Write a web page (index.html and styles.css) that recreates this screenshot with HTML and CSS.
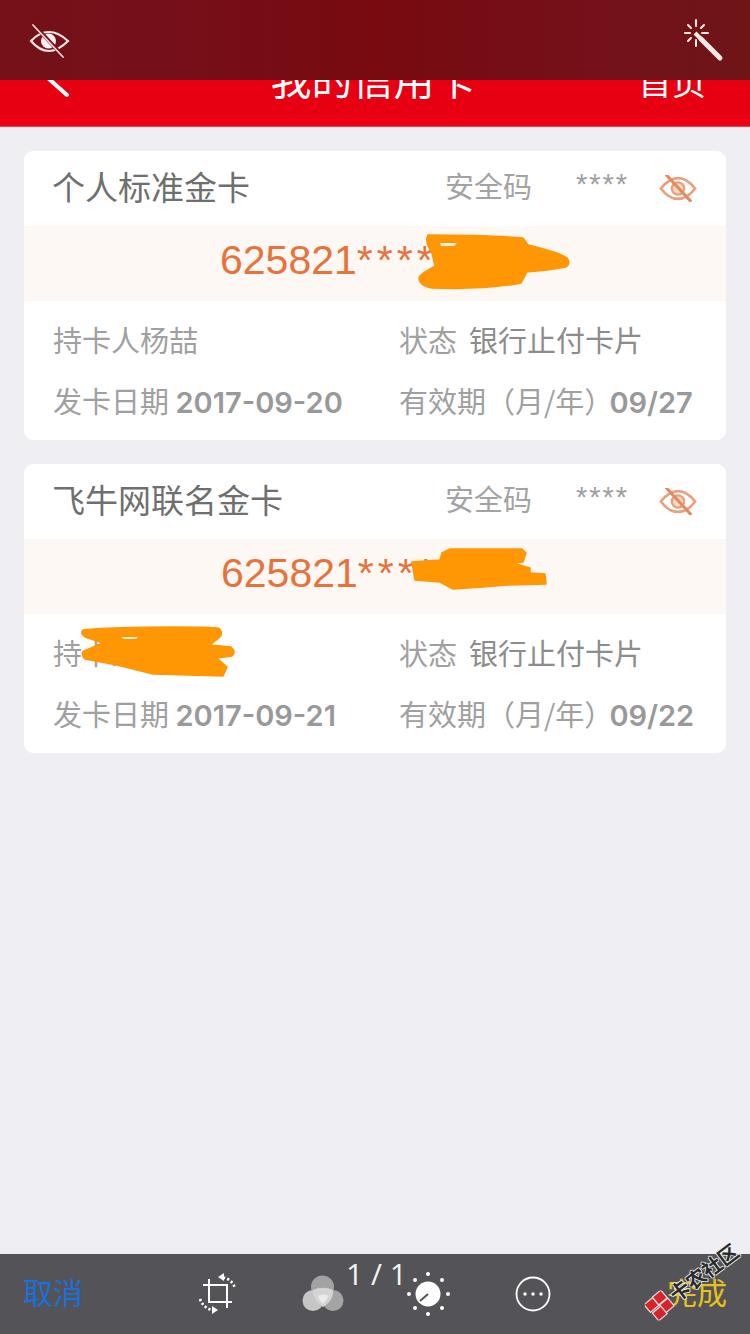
FILE: index.html
```html
<!DOCTYPE html>
<html lang="zh-CN">
<head>
<meta charset="utf-8">
<title>我的信用卡</title>
<link rel="stylesheet" href="styles.css">
</head>
<body>
<svg class="defs" width="0" height="0" aria-hidden="true">
  <symbol id="eye-off" viewBox="0 0 40 28">
    <path d="M2 14C8 6 14 3 20 3s12 3 18 11c-6 8-12 11-18 11S8 22 2 14Z" fill="none" stroke="currentColor" stroke-width="2.800"/>
    <circle cx="20" cy="14" r="6.500" fill="#f8d8c8" stroke="currentColor" stroke-width="2.400"/>
    <path d="M8 0 33 27" stroke="#e58a5f" stroke-width="3.200" stroke-linecap="round"/>
  </symbol>
</svg>
<div class="screen">
  <header class="navbar">
    <svg class="back" width="30" height="40" viewBox="0 0 30 40"><path d="M24 2 6 18l18 16" fill="none" stroke="#fff" stroke-width="4" stroke-linecap="round"/></svg>
    <h1 class="nav-title">我的信用卡</h1>
    <span class="nav-home">首页</span>
  </header>

  <main class="cards">
    <section class="card">
      <div class="card-head">
        <h2 class="card-name">个人标准金卡</h2>
        <span class="cvv-label">安全码</span>
        <span class="cvv-value">****</span>
        <svg class="eye" width="38" height="27"><use href="#eye-off"/></svg>
      </div>
      <div class="card-number">625821<span class="stars">****</span></div>
      <div class="card-info">
        <div class="label">持卡人杨喆</div>
        <div class="label">状态<span class="status">银行止付卡片</span></div>
        <div class="label">发卡日期 <b class="num">2017-09-20</b></div>
        <div class="label">有效期（月/年）<b class="num end">09/27</b></div>
      </div>
      <svg class="scribble" viewBox="24 151 702 289">
        <path class="ink" d="M428 235C460 235 500 236 523 238L528 245C545 249 560 253 567 258C570 262 569 265 566 267C550 270 538 271 527 272L521 283C495 288 460 289 432 288C422 286 417 281 420 276C425 271 432 268 435 266L432 253C428 247 425 240 428 235Z"/>
        <path class="ink-gap" d="M440 243h17l-3 3h-13Z"/>
      </svg>
    </section>

    <section class="card">
      <div class="card-head">
        <h2 class="card-name">飞牛网联名金卡</h2>
        <span class="cvv-label">安全码</span>
        <span class="cvv-value">****</span>
        <svg class="eye" width="38" height="27"><use href="#eye-off"/></svg>
      </div>
      <div class="card-number second">625821<span class="stars">****</span></div>
      <div class="card-info">
        <div class="label">持卡人</div>
        <div class="label">状态<span class="status">银行止付卡片</span></div>
        <div class="label">发卡日期 <b class="num">2017-09-21</b></div>
        <div class="label">有效期（月/年）<b class="num end">09/22</b></div>
      </div>
      <svg class="scribble" viewBox="24 464 702 289">
        <path class="ink" d="M442 553 450 549H522L526 553 523 562 513 563 530 568V573L545 574 546 584 507 585 483 587 453 589 440 582 415 580 412 562 440 560Z"/>
        <path class="ink" d="M83 630C100 627 190 626 218 628C223 631 222 636 219 638L210 645 231 647C235 650 235 654 232 656L217 658 227 667 223 676 153 674 117 665 85 659C81 655 82 652 84 651L103 643 85 637C81 634 81 632 83 630Z"/>
        <path class="ink-gap" d="M121 637h17l-2 2h-12Z"/>
      </svg>
    </section>
  </main>

  <footer class="toolbar">
    <span class="tool-text cancel">取消</span>
    <div class="tools">
      <svg class="tool" width="44" height="44" viewBox="196 1272 44 44">
        <path d="M203 1285H227V1308M209 1279V1302H232" fill="none" stroke="#fff" stroke-width="2"/>
        <path d="M223 1277.500C228 1278 233 1282 235 1288M200 1299C202 1305 207 1309 212 1310" fill="none" stroke="#fff" stroke-width="2.600" stroke-dasharray="2.200 2.200"/>
        <path d="M224 1273V1281L218 1277ZM212 1306V1314L218 1310Z" fill="#fff"/>
      </svg>
      <svg class="tool" width="44" height="44" viewBox="301 1272 44 44">
        <circle cx="322.500" cy="1287" r="11.500" fill="#a2a2a3"/>
        <circle cx="313" cy="1300.500" r="10.500" fill="#c6c6c7"/>
        <circle cx="333" cy="1300.500" r="10.500" fill="#a4a4a5"/>
        <path d="M313 1290C319 1287 327 1287 333 1290C334 1296 330 1303 323 1307C317 1303 312 1296 313 1290Z" fill="#d4d4d5"/>
        <path d="M318 1296C321 1294 326 1294 328 1296C327 1300 325 1302 323 1304C321 1302 319 1300 318 1296Z" fill="#ebebeb"/>
      </svg>
      <svg class="tool" width="44" height="44" viewBox="406 1274 44 44">
        <circle cx="428" cy="1296" r="12.500" fill="#fff"/>
        <path d="M420 1303 428 1296" stroke="#545458" stroke-width="2"/>
        <g fill="#fff">
          <circle cx="428" cy="1276" r="2"/><circle cx="442" cy="1282" r="2"/><circle cx="448" cy="1296" r="2"/><circle cx="442" cy="1310" r="2"/>
          <circle cx="428" cy="1316" r="2"/><circle cx="415" cy="1310" r="2"/><circle cx="409" cy="1296" r="2"/><circle cx="415" cy="1282" r="2"/>
        </g>
      </svg>
      <svg class="tool" width="44" height="44" viewBox="511 1271 44 44">
        <circle cx="533" cy="1293" r="16.500" fill="none" stroke="#fff" stroke-width="1.800"/>
        <circle cx="525" cy="1293" r="1.700" fill="#fff"/><circle cx="533" cy="1293" r="1.700" fill="#fff"/><circle cx="541" cy="1293" r="1.700" fill="#fff"/>
      </svg>
    </div>
    <span class="tool-text done">完成</span>
  </footer>

  <div class="edit-bar">
    <svg width="44" height="40" viewBox="26 20 44 40">
      <path d="M31 41C37 34.500 43 32 49 32s12 2.500 19 9c-7 7-13 10-19 10s-12-3-18-10Z" fill="none" stroke="#f5e6e6" stroke-width="2.200"/>
      <circle cx="48.500" cy="41" r="7.500" fill="#f8f0f0"/>
      <path d="M34 25 64 57" stroke="#751016" stroke-width="4"/>
      <path d="M33 25 63 57" stroke="#efd8d8" stroke-width="1.800" stroke-linecap="round"/>
    </svg>
    <svg width="44" height="44" viewBox="681 18 44 44">
      <path d="M695 33 701 39" stroke="#f6e8e8" stroke-width="4" fill="none"/>
      <path d="M701 39 720 58" stroke="#f6e8e8" stroke-width="5" stroke-linecap="round"/>
      <path d="M696 20V26M685 33H690M702 33H708M688 25 691 28M704 25 701 28M688 41 691 38M696 40V46" stroke="#f6e8e8" stroke-width="2" stroke-linecap="round"/>
    </svg>
  </div>

  <div class="pager">1 / 1</div>

  <div class="watermark">
    <svg width="30" height="30" viewBox="0 0 30 30" class="wm-logo">
      <g stroke="#dcdcdc" stroke-width="1.200" fill="#d8232a">
        <rect x="1.500" y="9.500" width="11" height="10" transform="rotate(-40 7 15)"/>
        <rect x="9.500" y="2" width="11" height="10" transform="rotate(-40 15 7)"/>
        <rect x="16.500" y="10" width="11" height="10" transform="rotate(-40 22 15)"/>
        <rect x="9.500" y="18" width="11" height="10" transform="rotate(-40 15 23)"/>
      </g>
    </svg>
    <span class="wm-text">卡农社区</span>
  </div>
</div>
</body>
</html>
```
FILE: styles.css
```css
* {
  box-sizing: border-box;
}

html,
body {
  margin: 0;
  padding: 0;
}

.defs {
  position: absolute;
}

.screen {
  position: relative;
  display: flex;
  flex-direction: column;
  width: 750px;
  height: 1334px;
  overflow: hidden;
  background: #eeeef3;
  font-family: "Noto Sans CJK SC", "Liberation Sans", sans-serif;
}

/* Navigation bar */
.navbar {
  flex: none;
  display: grid;
  grid-template-columns: 1fr auto 1fr;
  align-items: center;
  height: 127px;
  padding: 36px 44px 0 43px;
  background: linear-gradient(#e60012 0, #e60012 115px, #ea0010 115px);
  border-bottom: 1px solid #f0424a;
  color: #fff;
}

.back {
  display: block;
}

.nav-title {
  margin: 0 3px 8px 0;
  font-size: 41px;
  font-weight: 400;
  line-height: 56px;
}

.nav-home {
  justify-self: end;
  font-size: 34px;
  line-height: 50px;
}

/* Cards */
.cards {
  flex: 1;
  display: flex;
  flex-direction: column;
  gap: 24px;
  padding: 24px 24px 0;
}

.card {
  position: relative;
  height: 289px;
  border-radius: 9px;
  background: #fff;
  overflow: hidden;
}

.card-head {
  display: flex;
  align-items: center;
  height: 75px;
  padding: 0 29px 6px 28px;
}

.card-name {
  flex: 1;
  margin: 0;
  font-size: 33px;
  font-weight: 400;
  line-height: 60px;
  color: #6f6f6f;
}

.cvv-label {
  margin-bottom: 2px;
  font-size: 29px;
  color: #a3a3a3;
}

.cvv-value {
  margin: 0 30px 3px 44px;
  font-family: "Liberation Sans", sans-serif;
  font-size: 29px;
  letter-spacing: 2px;
  color: #a0a0a0;
  width: 53px;
}

.eye {
  flex: none;
  margin-top: 6px;
  color: #e9a07f;
}

.card-number {
  height: 75px;
  padding-left: 196px;
  background: #fef8f5;
  font-family: "Liberation Sans", sans-serif;
  font-size: 41px;
  line-height: 68px;
  color: #e6733c;
}

.card-number.second {
  padding-left: 197px;
}

.stars {
  letter-spacing: 4px;
}

.card-info {
  display: grid;
  grid-template-columns: 346px 1fr;
  grid-auto-rows: 63px;
  align-items: center;
  padding: 6px 29px 0;
}

.label {
  font-size: 29px;
  line-height: 40px;
  color: #a0a0a0;
  white-space: nowrap;
}

.status {
  margin-left: 12px;
  color: #8c8c8c;
}

.num {
  font-family: Inter, "Liberation Sans", sans-serif;
  font-size: 29px;
  font-weight: 600;
  color: #999;
}

.num.end {
  margin-left: -4px;
}

/* Marker scribbles drawn over the card */
.scribble {
  position: absolute;
  inset: 0;
  width: 702px;
  height: 289px;
}

.ink {
  fill: #ff9705;
  stroke: #ff9705;
  stroke-width: 1.500;
  stroke-linejoin: round;
}

.ink-gap {
  fill: #fdeedd;
}

/* Bottom toolbar */
.toolbar {
  flex: none;
  display: flex;
  align-items: center;
  justify-content: space-between;
  height: 80px;
  padding: 0 23px;
  background: #545458;
}

.tool-text {
  margin-bottom: 6px;
  font-size: 30px;
  line-height: 74px;
}

.cancel {
  color: #1b6fd8;
}

.done {
  color: #e6c31a;
}

.tools {
  display: flex;
  gap: 61px;
}

.tool {
  display: block;
}

/* Overlays */
.edit-bar {
  position: absolute;
  top: 0;
  left: 0;
  right: 0;
  display: flex;
  align-items: center;
  justify-content: space-between;
  height: 80px;
  padding: 0 25px 0 26px;
  background: linear-gradient(90deg, #741217, #75101a 20%, #780a10 50%, #74111a 80%, #6e1516);
}

.pager {
  position: absolute;
  top: 1254px;
  left: 346px;
  font-family: "Open Sans", sans-serif;
  font-size: 30px;
  line-height: 40px;
  color: #f4f4f4;
}

.watermark {
  position: absolute;
  top: 1280px;
  left: 654px;
  display: flex;
  align-items: center;
  width: 130px;
  transform: rotate(-37deg);
  transform-origin: 26px 34px;
}

.wm-logo {
  flex: none;
  transform: rotate(37deg);
}

.wm-text {
  font-size: 20px;
  font-weight: 700;
  line-height: 24px;
  color: #2a2a2a;
  text-shadow: 1px 0 #eee, -1px 0 #eee, 0 1px #eee, 0 -1px #eee;
  white-space: nowrap;
}
```
